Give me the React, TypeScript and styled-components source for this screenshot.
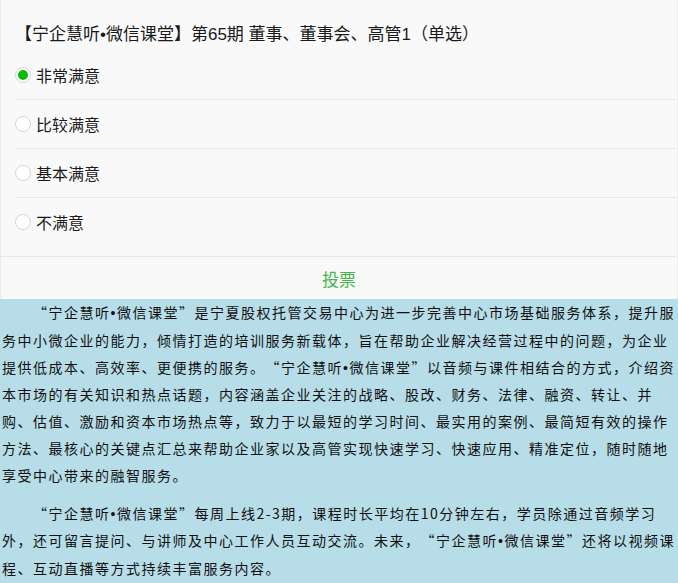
import { FC, useState } from "react";
import styled, { createGlobalStyle } from "styled-components";

const GlobalStyle = createGlobalStyle`
  body {
    margin: 0;
    background: #ffffff;
    font-family: "Liberation Sans", "Noto Sans CJK SC", sans-serif;
    text-spacing-trim: space-all;
  }
`;

const Page = styled.div`
  width: 678px;
`;

const VoteCard = styled.div`
  background: #f9f9f9;
  border-left: 1px solid #ececec;
  border-right: 1px solid #ececec;
  color: #1a1a1a;
`;

const Title = styled.div`
  padding: 23px 14px 4px;
  font-size: 17px;
  line-height: 24px;
`;

// the middle dot in the brand name is narrower than a CJK cell
const Dot = styled.span`
  font-family: "Liberation Sans", sans-serif;
`;

const OptionList = styled.div`
  padding-left: 14px;
  padding-bottom: 10px;
`;

const OptionRow = styled.label<{ $last?: boolean }>`
  display: flex;
  align-items: center;
  gap: 5px;
  height: 48px;
  font-size: 16px;
  cursor: pointer;
  border-bottom: ${(p) => (p.$last ? "none" : "1px solid #e6e6e6")};
`;

const Radio = styled.span<{ $checked: boolean }>`
  box-sizing: border-box;
  width: 16px;
  height: 16px;
  border-radius: 50%;
  border: 1px solid #d6d6d6;
  background: #ffffff;
  display: flex;
  align-items: center;
  justify-content: center;

  &::after {
    content: "";
    width: 10px;
    height: 10px;
    border-radius: 50%;
    background: ${(p) => (p.$checked ? "#09bb07" : "transparent")};
  }
`;

const SubmitBar = styled.div`
  border-top: 1px solid #e6e6e6;
  height: 42px;
  display: flex;
  align-items: center;
  justify-content: center;
  font-size: 17px;
  color: #45b54a;
  cursor: pointer;
`;

const Intro = styled.div`
  background: #b6dde8;
  padding: 0 0 4px 2px;
  color: #111111;
  font-family: "Noto Sans CJK SC", "Liberation Sans", sans-serif;
  font-size: 14px;
  line-height: 26.8px;
  letter-spacing: 1.5px;
`;

const Para = styled.p`
  margin: 0 0 11px;
  text-indent: 31px;

  &:last-child {
    margin-bottom: 0;
  }
`;

const options = ["非常满意", "比较满意", "基本满意", "不满意"];

const Brand: FC = () => (
  <>
    宁企慧听<Dot>•</Dot>微信课堂
  </>
);

const App: FC = () => {
  const [choice, setChoice] = useState(0);
  return (
    <Page>
      <GlobalStyle />
      <VoteCard>
        <Title>
          【<Brand />】第65期 董事、董事会、高管1（单选）
        </Title>
        <OptionList>
          {options.map((label, i) => (
            <OptionRow
              key={label}
              $last={i === options.length - 1}
              onClick={() => setChoice(i)}
            >
              <Radio $checked={choice === i} />
              {label}
            </OptionRow>
          ))}
        </OptionList>
        <SubmitBar>投票</SubmitBar>
      </VoteCard>
      <Intro>
        <Para>
          “<Brand />”是宁夏股权托管交易中心为进一步完善中心市场基础服务体系，提升服务中小微企业的能力，倾情打造的培训服务新载体，旨在帮助企业解决经营过程中的问题，为企业提供低成本、高效率、更便携的服务。“<Brand />”以音频与课件相结合的方式，介绍资本市场的有关知识和热点话题，内容涵盖企业关注的战略、股改、财务、法律、融资、转让、并购、估值、激励和资本市场热点等，致力于以最短的学习时间、最实用的案例、最简短有效的操作方法、最核心的关键点汇总来帮助企业家以及高管实现快速学习、快速应用、精准定位，随时随地享受中心带来的融智服务。
        </Para>
        <Para>
          “<Brand />”每周上线2-3期，课程时长平均在10分钟左右，学员除通过音频学习外，还可留言提问、与讲师及中心工作人员互动交流。未来，“<Brand />”还将以视频课程、互动直播等方式持续丰富服务内容。
        </Para>
      </Intro>
    </Page>
  );
};

export default App;
